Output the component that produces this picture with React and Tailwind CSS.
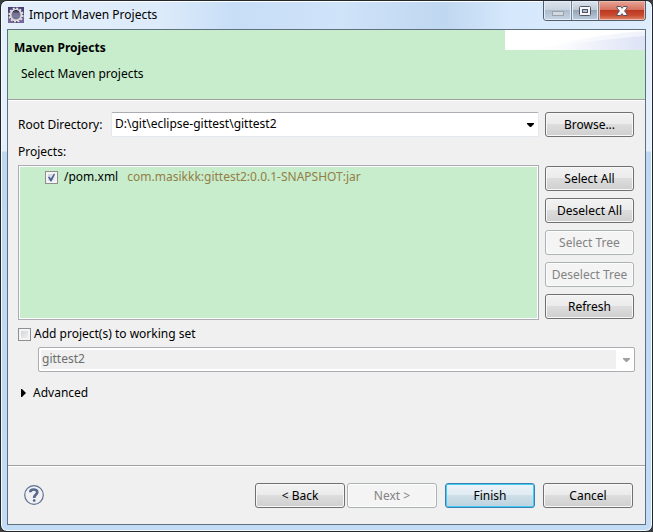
import React, { useState } from "react";
import clsx from "clsx";

function Button({ children, className, primary, disabled }) {
  return (
    <button
      type="button"
      disabled={disabled}
      className={clsx(
        "h-[25px] shrink-0 rounded-[3px] border text-center leading-[21px] whitespace-nowrap",
        disabled && "border-[#adb2b5] bg-[#f4f4f4] text-[#838383] shadow-[inset_0_0_0_1px_#fcfcfc]",
        primary &&
          "border-[#3c7fb1] bg-[linear-gradient(#eaf3f8_0%,#dfebf2_50%,#cddfe8_50%,#bdd3df_100%)] shadow-[inset_0_0_0_1px_#3fcdf5]",
        !disabled &&
          !primary &&
          "border-[#707070] bg-[linear-gradient(#f2f2f2_0%,#ebebeb_50%,#dddddd_50%,#cfcfcf_100%)] shadow-[inset_0_0_0_1px_#f8f8f8]",
        className
      )}
    >
      {children}
    </button>
  );
}

function EclipseIcon() {
  return (
    <svg width="16" height="16" viewBox="0 0 16 16" aria-hidden="true">
      <defs>
        <linearGradient id="lens" x1="0" y1="0" x2="0" y2="1">
          <stop offset="0" stopColor="#4c4569" />
          <stop offset="1" stopColor="#8583a5" />
        </linearGradient>
      </defs>
      <rect width="16" height="16" fill="#4c3f73" />
      <path d="M0 16V9l6 7zM16 9v7h-6z" fill="#7467a0" />
      <circle cx="8" cy="8" r="6.7" fill="none" stroke="#e6e5e5" strokeWidth="1.8" strokeDasharray="2 1.51" />
      <circle cx="8" cy="8" r="5.4" fill="url(#lens)" stroke="#dedddd" strokeWidth="1.8" />
      <path d="M4 7h8M4 9h8" stroke="#a39fb9" strokeWidth=".6" />
      <path d="M5 4.6a4.6 4.6 0 0 1 6 0" stroke="#2c2448" fill="none" />
    </svg>
  );
}

function CaptionButtons() {
  return (
    <div className="flex h-[20px] w-[103px] shrink-0 overflow-hidden rounded-b-[4px] border border-t-0 border-[#525c6b]">
      <button type="button" aria-label="Minimize" className="flex w-[28px] items-center justify-center border-r border-[#76818f] bg-[linear-gradient(#dbe3ed_0%,#c8d3df_48%,#aebdce_50%,#c6d5e6_100%)] shadow-[inset_0_0_0_1px_#e4edf7]">
        <svg width="12" height="18" viewBox="0 0 12 18" aria-hidden="true">
          <rect x=".5" y="9.5" width="11" height="4" fill="#d4d9df" stroke="#9ba4ae" />
        </svg>
      </button>
      <button type="button" aria-label="Maximize" className="flex w-[27px] items-center justify-center border-r border-[#76818f] bg-[linear-gradient(#dbe3ed_0%,#bdc9d7_48%,#94a5b8_50%,#bccde0_100%)] shadow-[inset_0_0_0_1px_#e4edf7]">
        <svg width="12" height="18" viewBox="0 0 12 18" aria-hidden="true">
          <rect x=".5" y="4.5" width="11" height="9" rx="1" fill="#f7f7f7" stroke="#535666" />
          <rect x="3.5" y="7.5" width="5" height="3" fill="#a9bdd3" stroke="#535666" />
        </svg>
      </button>
      <button type="button" aria-label="Close" className="flex flex-1 items-center justify-center bg-[linear-gradient(#e7a598_0%,#d5725e_46%,#bb3922_50%,#c84a30_75%,#e08a6a_100%)] shadow-[inset_0_0_0_1px_#eeb8a8]">
        <svg width="12" height="18" viewBox="0 0 12 18" aria-hidden="true">
          <path d="M1 4.5h3.500L6 6.300l1.500-1.800H11v1.500L8.600 9l2.400 3v1.500H7.500L6 11.700l-1.500 1.800H1V12l2.400-3L1 6z" fill="#f7f7f7" stroke="#56525f" strokeLinejoin="round" />
        </svg>
      </button>
    </div>
  );
}

function Arrow({ className }) {
  return (
    <svg width="7" height="4" viewBox="0 0 7 4" className={clsx("pointer-events-none absolute top-[11px]", className)} aria-hidden="true">
      <path d="M0 0h7v1L4 4H3L0 1z" fill="currentColor" />
    </svg>
  );
}

function HelpIcon() {
  return (
    <svg width="20" height="20" viewBox="0 0 20 20" aria-hidden="true">
      <circle cx="10" cy="10" r="9.300" fill="#f1f1f3" stroke="#5c7092" strokeWidth="1.200" />
      <path d="M6.200 7.300C6.200 3.500 13.300 3.500 13.300 7.200C13.300 9.600 10.200 9.600 10.200 12.900" fill="none" stroke="#56698f" strokeWidth="2.600" />
      <rect x="8.900" y="14.300" width="2.600" height="2.400" rx=".8" fill="#56698f" />
    </svg>
  );
}

export default function App() {
  const [pomChecked, setPomChecked] = useState(true);
  const [workingSet, setWorkingSet] = useState(false);

  return (
    <div className="flex min-h-screen flex-col bg-[#3a3d42] font-['Noto_Sans','Open_Sans',sans-serif] text-[12px] leading-4 text-black">
      <div className="flex flex-1 flex-col rounded-[7px] border border-[#22272e] bg-[linear-gradient(#e3effc_0px,#e3effc_150px,#bed8f2_151px,#c3dcf5_100%)] px-[6px] pb-[6px] shadow-[inset_0_0_0_1px_#f5faff]">
        <header className="-mx-[5px] flex h-[28px] items-start justify-between rounded-t-[6px] border-t border-white bg-[linear-gradient(90deg,#e4effb_0%,#ddebfa_24%,#c7def7_36%,#cfe3f9_52%,#bfd7f0_68%,#d5e8fc_78%,#deedfc_100%)] pl-[6px]">
          <div className="flex h-[26px] items-center gap-[5px]">
            <EclipseIcon />
            <h1>Import Maven Projects</h1>
          </div>
          <div className="-mt-px pr-[5px]">
            <CaptionButtons />
          </div>
        </header>

        <main className="flex flex-1 flex-col border border-[#5f6f7e] bg-[#f0f0f0]">
          <section className="flex h-[70px] justify-between border-b border-[#a0a0a0] bg-[#c7edcc]">
            <div className="pt-[10px] pl-[6px]">
              <h2 className="font-bold">Maven Projects</h2>
              <p className="mt-[10px] pl-[7px]">Select Maven projects</p>
            </div>
            <svg width="140" height="20" viewBox="0 0 140 20" aria-hidden="true">
              <defs>
                <linearGradient id="beam">
                  <stop offset="0" stopColor="#fff" />
                  <stop offset="1" stopColor="#eff2fb" />
                </linearGradient>
                <linearGradient id="banner">
                  <stop offset="0" stopColor="#fff" />
                  <stop offset=".3" stopColor="#fbfcfe" />
                  <stop offset="1" stopColor="#dde2f5" />
                </linearGradient>
              </defs>
              <rect width="140" height="20" fill="#fff" />
              <path d="M60 12Q105 3 140 1v19H40z" fill="url(#beam)" />
              <path d="M20 20Q90 10 140 6v14z" fill="url(#banner)" />
            </svg>
          </section>

          <form className="flex flex-1 flex-col border-t border-white px-[10px]" onSubmit={(e) => e.preventDefault()}>
            <div className="mt-[11px] flex items-center pr-px">
              <label htmlFor="root" className="w-[93px] shrink-0">Root Directory:</label>
              <div className="relative flex-1">
                <select id="root" className="block h-[25px] w-full appearance-none rounded-[2px] border border-[#e3e9ef] border-t-[#abadb3] bg-white pr-5 pb-px pl-[3px]">
                  <option>D:\git\eclipse-gittest\gittest2</option>
                </select>
                <Arrow className="right-[5px]" />
              </div>
              <Button className="ml-[6px] w-[89px]">Browse...</Button>
            </div>

            <p id="projects" className="mt-[7px]">Projects:</p>
            <div className="mt-[5px] flex gap-[6px] pr-px">
              <ul aria-labelledby="projects" className="flex-1 border border-[#abadb3] bg-[#c7edcc] pt-[3px] pl-[26px] shadow-[inset_0_0_0_1px_#ffffff]">
                <li className="flex h-4 items-center">
                  <CheckBox id="pom" checked={pomChecked} onChange={setPomChecked} />
                  <label htmlFor="pom" className="pl-[6px] whitespace-nowrap">
                    /pom.xml <span className="pl-[6px] text-[#957d47]">com.masikkk:gittest2:0.0.1-SNAPSHOT:jar</span>
                  </label>
                </li>
              </ul>
              <div className="flex w-[89px] flex-col gap-[7px] py-px">
                <Button>Select All</Button>
                <Button>Deselect All</Button>
                <Button disabled>Select Tree</Button>
                <Button disabled>Deselect Tree</Button>
                <Button>Refresh</Button>
              </div>
            </div>

            <div className="mt-[6px] flex items-center gap-[3px]">
              <CheckBox id="working-set" checked={workingSet} onChange={setWorkingSet} />
              <label htmlFor="working-set">Add project(s) to working set</label>
            </div>
            <div className="relative mt-[5px] ml-5">
              <select aria-label="Working set" disabled className="block h-[25px] w-full appearance-none rounded-[2px] border border-[#abadb3] bg-[#f0f0f0] pr-5 pb-px pl-[3px] text-[#6d6d6d] opacity-100 shadow-[inset_-18px_0_0_0_#ffffff,inset_0_0_0_2px_#ffffff]">
                <option>gittest2</option>
              </select>
              <Arrow className="right-[5px] text-[#a0a0a0]" />
            </div>

            <button type="button" aria-expanded="false" className="mt-[13px] flex items-center gap-[7px] self-start pl-[3px]">
              <svg width="5" height="8" viewBox="0 0 5 8" aria-hidden="true">
                <path d="M0 0h1l4 4-4 4H0z" />
              </svg>
              Advanced
            </button>
          </form>

          <footer className="flex h-[59px] items-center border-t border-[#a0a0a0] pr-[12px] pl-[16px] shadow-[inset_0_1px_0_#ffffff]">
            <button type="button" aria-label="Help" className="mr-auto">
              <HelpIcon />
            </button>
            <Button className="w-[90px]">&lt; Back</Button>
            <Button disabled className="ml-[2px] w-[90px]">Next &gt;</Button>
            <Button primary className="ml-2 w-[90px]">Finish</Button>
            <Button className="ml-2 w-[90px]">Cancel</Button>
          </footer>
        </main>
      </div>
    </div>
  );
}

function CheckBox({ id, checked, onChange }) {
  return (
    <span className="relative block size-[13px] shrink-0">
      <input
        id={id}
        type="checkbox"
        checked={checked}
        onChange={(e) => onChange(e.target.checked)}
        className="block size-[13px] appearance-none border border-[#8e8f8f] bg-linear-to-br from-[#cbcfd5] to-[#f6f6f6] shadow-[inset_0_0_0_2px_#f4f4f4]"
      />
      {checked && (
        <svg width="13" height="13" viewBox="0 0 13 13" className="pointer-events-none absolute inset-0" aria-hidden="true">
          <path d="M3 6.200l1.300-.8 1.500 2.200L9 2.600l1 .6-3.500 7.300h-1z" fill="#4b5f97" />
        </svg>
      )}
    </span>
  );
}
